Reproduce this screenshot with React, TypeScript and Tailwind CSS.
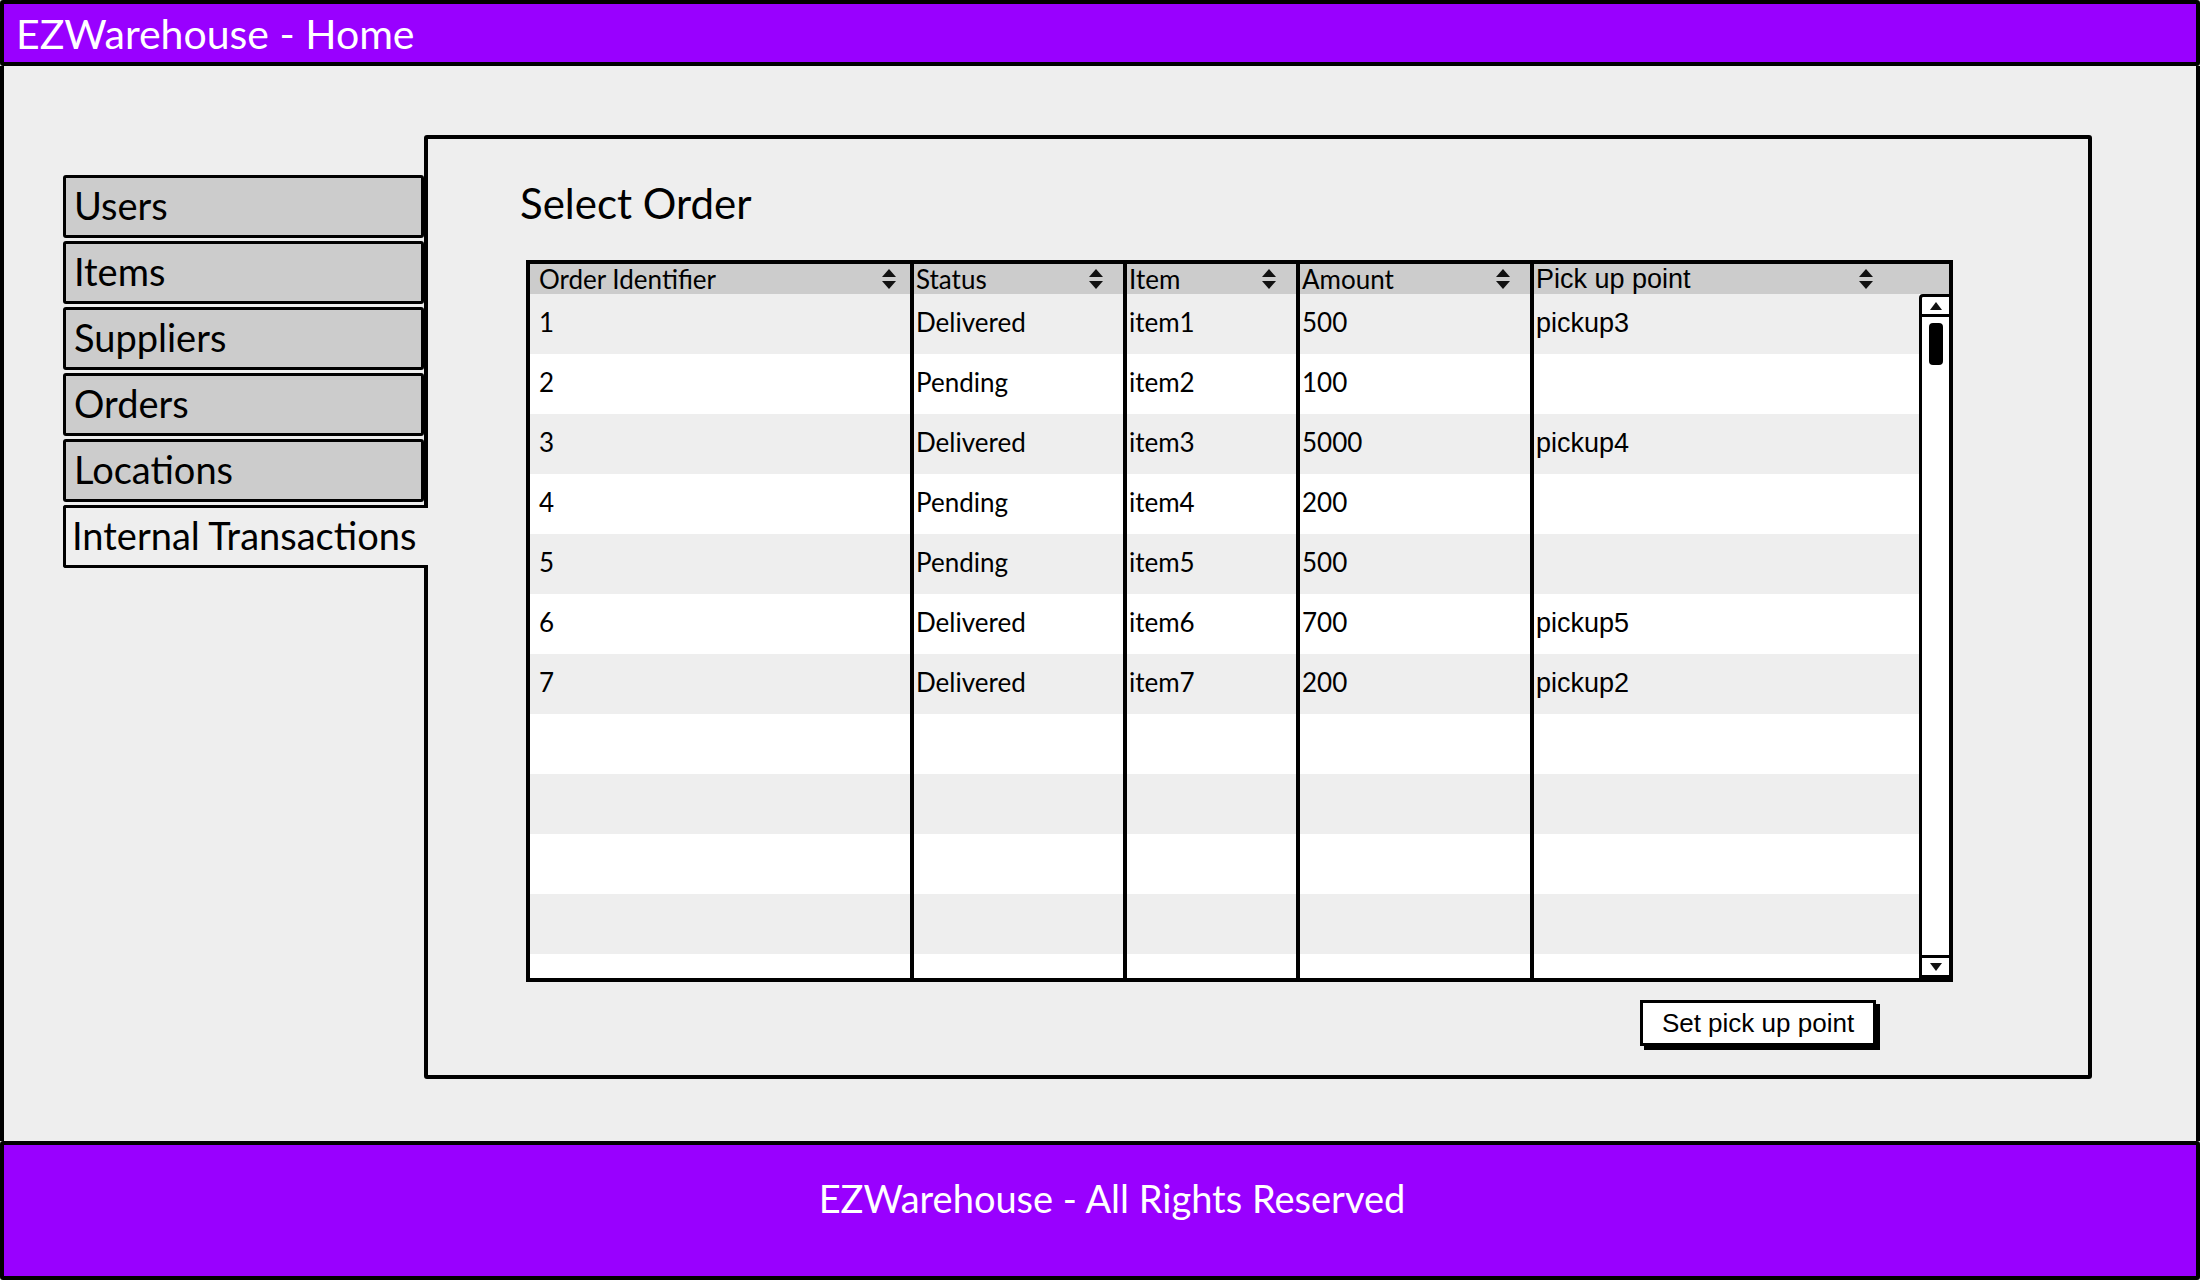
import { ChevronUp } from 'lucide-react';

const tabs = ['Users', 'Items', 'Suppliers', 'Orders', 'Locations'];

const orders = [
  { id: '1', status: 'Delivered', item: 'item1', amount: '500', pickup: 'pickup3' },
  { id: '2', status: 'Pending', item: 'item2', amount: '100', pickup: '' },
  { id: '3', status: 'Delivered', item: 'item3', amount: '5000', pickup: 'pickup4' },
  { id: '4', status: 'Pending', item: 'item4', amount: '200', pickup: '' },
  { id: '5', status: 'Pending', item: 'item5', amount: '500', pickup: '' },
  { id: '6', status: 'Delivered', item: 'item6', amount: '700', pickup: 'pickup5' },
  { id: '7', status: 'Delivered', item: 'item7', amount: '200', pickup: 'pickup2' },
];

// pad out to the empty striped rows under the data
const rows = [...orders, ...Array.from({ length: 5 }, () => null)];

const cols = 'grid grid-cols-[380px_213px_173px_234px_1fr]';

function SortIcon() {
  return (
    <svg width="16" height="24" viewBox="0 0 16 24" className="shrink-0">
      <path d="M8 2 L15 10 L1 10 Z" fill="#111" />
      <path d="M8 22 L15 14 L1 14 Z" fill="#111" />
    </svg>
  );
}

function HeadCell({ label, pr, first, arial }: { label: string; pr: string; first?: boolean; arial?: boolean }) {
  return (
    <div
      className={`flex items-center justify-between h-[30px] ${pr} ${first ? 'pl-[9px]' : 'pl-[2px] border-l-4 border-black'} ${
        arial ? "font-['Liberation_Sans',sans-serif] text-[27px]" : ''
      }`}
    >
      <span className="leading-none">{label}</span>
      <SortIcon />
    </div>
  );
}

function Scrollbar() {
  return (
    <div className="w-[30px] shrink-0 bg-white border-[3px] border-black border-r-0 rounded-tl-[4px] flex flex-col">
      <div className="h-[20px] border-b-[3px] border-black flex items-center justify-center">
        <svg width="14" height="10" viewBox="0 0 14 10">
          <path d="M7 1 L13 9 L1 9 Z" fill="#111" />
        </svg>
      </div>
      <div className="mt-[6px] mx-auto w-[14px] h-[42px] bg-black rounded-[4px]" />
      <div className="flex-1" />
      <div className="h-[20px] border-t-[3px] border-black flex items-center justify-center">
        <svg width="14" height="10" viewBox="0 0 14 10">
          <path d="M7 9 L13 1 L1 1 Z" fill="#111" />
        </svg>
      </div>
    </div>
  );
}

export default function App() {
  return (
    <div className="w-[2200px] h-[1280px] flex flex-col bg-[#eeeeee] font-['Lato',sans-serif] text-black overflow-hidden">
      <header className="h-[66px] shrink-0 bg-[#9900ff] border-4 border-black rounded-[3px] flex items-center pl-[12px]">
        <h1 className="text-white text-[41px] leading-none">EZWarehouse - Home</h1>
      </header>

      <main className="flex-1 border-x-4 border-black flex items-start pl-[59px] pt-[69px]">
        <nav className="relative z-10 w-[361px] mt-[40px] flex flex-col gap-[3px] text-[38px]">
          {tabs.map((t) => (
            <div
              key={t}
              className="h-[63px] bg-[#cccccc] border-[3px] border-black rounded-[3px] flex items-center pl-[8px] pb-[4px] leading-none"
            >
              {t}
            </div>
          ))}
          <div className="h-[63px] mr-[-4px] bg-[#eeeeee] border-[3px] border-r-0 border-black rounded-l-[3px] flex items-center pl-[6px] pb-[4px] leading-none">
            Internal Transactions
          </div>
        </nav>

        <section className="w-[1668px] h-[944px] border-4 border-black rounded-[3px] bg-[#eeeeee] pl-[92px] pt-[40px] flex flex-col">
          <h2 className="text-[42px] leading-[48px]">Select Order</h2>

          <div className="mt-[33px] ml-[6px] w-[1427px] flex flex-col">
            <div className="h-[722px] border-4 border-black bg-white flex flex-col text-[26px]">
              <div className={`${cols} bg-[#cccccc] shrink-0`}>
                <HeadCell label="Order Identifier" pr="pr-[13px]" first />
                <HeadCell label="Status" pr="pr-[19px]" />
                <HeadCell label="Item" pr="pr-[19px]" />
                <HeadCell label="Amount" pr="pr-[19px]" />
                <HeadCell label="Pick up point" pr="pr-[75px]" arial />
              </div>

              <div className="flex-1 flex min-h-0">
                <div className="flex-1 overflow-hidden">
                  {rows.map((r, i) => (
                    <div
                      key={i}
                      className={`grid grid-cols-[380px_213px_173px_234px_1fr] h-[60px] ${i % 2 === 0 ? 'bg-[#eeeeee]' : 'bg-white'}`}
                    >
                      <div className="pl-[9px] pt-[9px]">{r?.id}</div>
                      <div className="pl-[2px] pt-[9px] border-l-4 border-black">{r?.status}</div>
                      <div className="pl-[2px] pt-[9px] border-l-4 border-black">{r?.item}</div>
                      <div className="pl-[2px] pt-[9px] border-l-4 border-black">{r?.amount}</div>
                      <div className="pl-[2px] pt-[9px] border-l-4 border-black font-['Liberation_Sans',sans-serif] text-[27px]">
                        {r?.pickup}
                      </div>
                    </div>
                  ))}
                </div>
                <Scrollbar />
              </div>
            </div>

            <button className="self-end mr-[77px] mt-[18px] h-[46px] w-[236px] bg-white border-[3px] border-black shadow-[4px_4px_0_#000] font-['Liberation_Sans',sans-serif] text-[26px] leading-none">
              Set pick up point
            </button>
          </div>
        </section>
      </main>

      <footer className="h-[139px] shrink-0 bg-[#9900ff] border-4 border-black rounded-[3px] flex items-center justify-center pb-[26px] pl-[24px]">
        <p className="text-white text-[38px] leading-none">EZWarehouse - All Rights Reserved</p>
      </footer>
    </div>
  );
}
